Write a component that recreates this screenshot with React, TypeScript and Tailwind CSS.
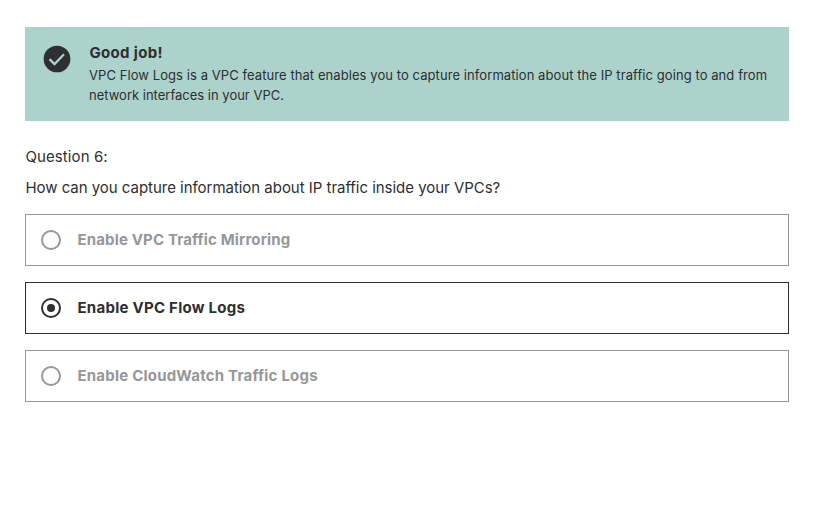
const options = [
  { label: 'Enable VPC Traffic Mirroring', selected: false, tracking: 'tracking-[0.15px]' },
  { label: 'Enable VPC Flow Logs', selected: true, tracking: 'tracking-[0.26px]' },
  { label: 'Enable CloudWatch Traffic Logs', selected: false, tracking: 'tracking-[0.21px]' },
];

function Radio({ selected }: { selected: boolean }) {
  return (
    <span className="flex size-5 shrink-0 items-center justify-center rounded-full border-2 border-current">
      {selected && <span className="size-2 rounded-full bg-current" />}
    </span>
  );
}

export default function App() {
  return (
    <main className="h-[507px] w-[824px] bg-white pt-[27px] pr-[35px] pl-[25px] font-['Inter',sans-serif] text-[#2d2f31]">
      <section className="flex h-[94px] bg-[#acd2cc] pt-4 pl-[18px]">
        <svg viewBox="0 0 28 28" className="mt-[2px] size-7 shrink-0">
          <circle cx="14" cy="14" r="13.35" fill="#2d2f31" />
          <path d="m6.5 14.1 5 5 9.5-9.9" fill="none" stroke="#acd2cc" strokeWidth="2.2" />
        </svg>
        <div className="ml-[18px] whitespace-nowrap">
          <h1 className="pl-[0.4px] text-[15px] leading-5 font-bold tracking-[0.35px]">Good job!</h1>
          <p className="mt-[2px] text-[13px] leading-5">
            <span className="tracking-[0.075px]">
              VPC Flow Logs is a VPC feature that enables you to capture information about the IP traffic going to and from
            </span>
            <br />
            network interfaces in your VPC.
          </p>
        </div>
      </section>
      <p className="mt-6 pl-[0.4px] text-[15px] leading-6 tracking-[0.1px]">Question 6:</p>
      <p className="mt-[7px] pl-[0.4px] text-[15px] leading-6 tracking-[-0.03px]">
        How can you capture information about IP traffic inside your VPCs?
      </p>
      <div className="mt-[14px] flex flex-col gap-4">
        {options.map(({ label, selected, tracking }) => (
          <label
            key={label}
            className={`flex h-[52px] items-center gap-[16.5px] border px-[15px] text-[15px] font-bold ${
              selected ? 'border-[#2d2f31] text-[#2d2f31]' : 'border-[#969798] text-[#969798]'
            }`}
          >
            <Radio selected={selected} />
            <span className={`whitespace-nowrap ${tracking}`}>{label}</span>
          </label>
        ))}
      </div>
    </main>
  );
}
